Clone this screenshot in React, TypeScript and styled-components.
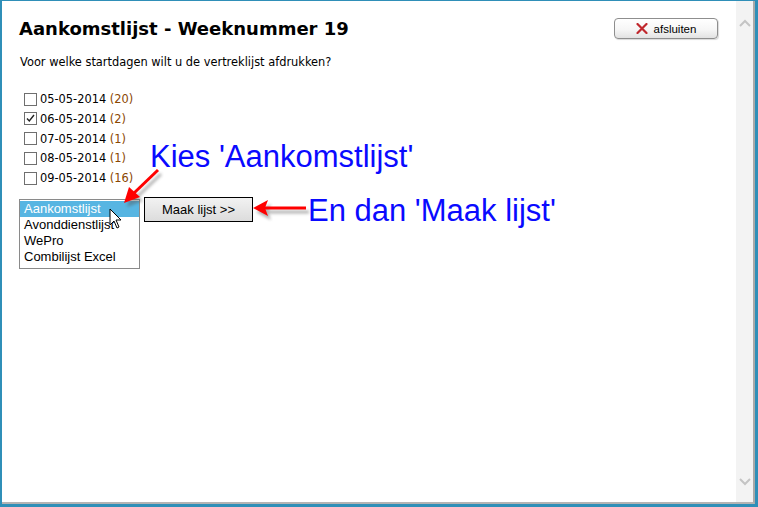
import React from "react";
import styled, { createGlobalStyle } from "styled-components";

const Global = createGlobalStyle`
  html, body { margin: 0; padding: 0; background: #ffffff; }
  * { box-sizing: border-box; }
`;

const Window = styled.div`
  position: relative;
  width: 758px;
  height: 507px;
  background: #2f8fb8;
  padding: 1px 3px 3px 2px;
  display: flex;
`;

const Frame = styled.div`
  flex: 1;
  display: flex;
  background: #ffffff;
  border-right: 2px solid #a9a9a9;
  border-bottom: 2px solid #b4b4b4;
`;

const Content = styled.div`
  flex: 1;
  padding: 16px 0 0 17px;
  display: flex;
  flex-direction: column;
  font-family: "DejaVu Sans", Verdana, sans-serif;
  color: #000;
`;

const Header = styled.div`
  display: flex;
  align-items: flex-start;
  justify-content: space-between;
  padding-right: 18px;
`;

const Title = styled.h1`
  margin: 0;
  font-size: 18px;
  font-weight: bold;
  line-height: 24px;
`;

const CloseButton = styled.button`
  margin-top: 1px;
  width: 104px;
  height: 21px;
  border: 1px solid #8e8e8e;
  border-radius: 4px;
  background: linear-gradient(#ffffff 0%, #f6f6f6 55%, #e2e2e2 100%);
  box-shadow: 1px 1px 1px rgba(0, 0, 0, 0.15);
  display: flex;
  align-items: center;
  justify-content: center;
  gap: 6px;
  font-family: "Liberation Sans", Arial, sans-serif;
  font-size: 11.5px;
  color: #000;
  padding: 0;
`;

const Subtitle = styled.p`
  margin: 14px 0 0 1px;
  font-size: 11.4px;
  line-height: 14px;
`;

const DayList = styled.div`
  margin-top: 23px;
  display: flex;
  flex-direction: column;
  gap: 5.8px;
  padding-left: 5px;
`;

const DayRow = styled.label`
  display: flex;
  align-items: center;
  gap: 3px;
  font-size: 11.4px;
  line-height: 14px;
  height: 14px;
`;

const Box = styled.span`
  width: 13px;
  height: 13px;
  border: 1px solid #6f6f6f;
  background: #fff;
  display: flex;
  align-items: center;
  justify-content: center;
`;

const Count = styled.span`
  color: #8a4600;
`;

const Controls = styled.div`
  margin-top: 12px;
  display: flex;
  align-items: flex-start;
  gap: 4px;
`;

const ListBox = styled.div`
  margin-top: 2px;
  width: 121px;
  height: 70px;
  border: 1px solid #8a8a8a;
  padding: 1px 0;
  display: flex;
  flex-direction: column;
  font-family: "Liberation Sans", Arial, sans-serif;
  font-size: 13px;
`;

const Option = styled.div<{ $selected?: boolean }>`
  height: 16px;
  line-height: 16px;
  padding-left: 4px;
  background: ${(p) => (p.$selected ? "#57b5e2" : "transparent")};
  color: ${(p) => (p.$selected ? "#ffffff" : "#000000")};
`;

const MakeButton = styled.button`
  width: 109px;
  height: 25px;
  border: 1px solid #000;
  background: linear-gradient(#f2f2f2, #dcdcdc);
  font-family: "Liberation Sans", Arial, sans-serif;
  font-size: 13px;
  color: #000;
  padding: 0;
`;

const Scrollbar = styled.div`
  width: 17px;
  background: #f3f3f3;
  display: flex;
  flex-direction: column;
  justify-content: space-between;
  align-items: center;
  padding: 18px 0 16px;
`;

const Note = styled.div<{ $x: number; $y: number }>`
  position: absolute;
  left: ${(p) => p.$x}px;
  top: ${(p) => p.$y}px;
  font-family: "Liberation Sans", Arial, sans-serif;
  font-size: 31px;
  line-height: 36px;
  color: #0a0aff;
  white-space: nowrap;
`;

const Overlay = styled.svg`
  position: absolute;
  left: 0;
  top: 0;
  pointer-events: none;
`;

const days = [
  { d: "05-05-2014", n: 20, c: false },
  { d: "06-05-2014", n: 2, c: true },
  { d: "07-05-2014", n: 1, c: false },
  { d: "08-05-2014", n: 1, c: false },
  { d: "09-05-2014", n: 16, c: false },
];

export default function App() {
  return (
    <>
      <Global />
      <Window>
        <Frame>
          <Content>
            <Header>
              <Title>Aankomstlijst - Weeknummer 19</Title>
              <CloseButton>
                <svg width="12" height="11" viewBox="0 0 12 11">
                  <path d="M1.5 1 L10.5 10 M10.5 1 L1.5 10" stroke="#c0282d" strokeWidth="2.2" strokeLinecap="round" />
                </svg>
                afsluiten
              </CloseButton>
            </Header>
            <Subtitle>Voor welke startdagen wilt u de vertreklijst afdrukken?</Subtitle>
            <DayList>
              {days.map((x) => (
                <DayRow key={x.d}>
                  <Box>
                    {x.c && (
                      <svg width="9" height="9" viewBox="0 0 9 9">
                        <path d="M1 4.5 L3.3 7 L8 1" stroke="#222" strokeWidth="1.4" fill="none" />
                      </svg>
                    )}
                  </Box>
                  <span>
                    {x.d} <Count>({x.n})</Count>
                  </span>
                </DayRow>
              ))}
            </DayList>
            <Controls>
              <ListBox>
                <Option $selected>Aankomstlijst</Option>
                <Option>Avonddienstlijst</Option>
                <Option>WePro</Option>
                <Option>Combilijst Excel</Option>
              </ListBox>
              <MakeButton>Maak lijst &gt;&gt;</MakeButton>
            </Controls>
          </Content>
          <Scrollbar>
            <svg width="12" height="8" viewBox="0 0 12 8">
              <path d="M1 7 L6 2 L11 7" stroke="#c4c4c4" strokeWidth="2" fill="none" />
            </svg>
            <svg width="12" height="8" viewBox="0 0 12 8">
              <path d="M1 1 L6 6 L11 1" stroke="#c4c4c4" strokeWidth="2" fill="none" />
            </svg>
          </Scrollbar>
        </Frame>
        <Note $x={150} $y={139}>Kies 'Aankomstlijst'</Note>
        <Note $x={308} $y={193}>En dan 'Maak lijst'</Note>
        <Overlay width="758" height="507" viewBox="0 0 758 507">
          <defs>
            <filter id="sh" x="-20%" y="-20%" width="140%" height="140%">
              <feGaussianBlur stdDeviation="1.5" />
            </filter>
          </defs>
          <g transform="translate(3,4)" filter="url(#sh)" opacity="0.45">
            <path d="M158 170 L133 194" stroke="#555" strokeWidth="3" fill="none" />
            <path d="M124 203 L129 187 L140 197 Z" fill="#555" />
            <path d="M306 208 L262 208" stroke="#555" strokeWidth="3" fill="none" />
            <path d="M253 208 L268 200 L265 208 L268 216 Z" fill="#555" />
          </g>
          <path d="M158 170 L133 194" stroke="#f00" strokeWidth="3" fill="none" />
          <path d="M124 203 L129 187 L140 197 Z" fill="#f00" />
          <path d="M306 208 L262 208" stroke="#f00" strokeWidth="3" fill="none" />
          <path d="M253 208 L268 200 L265 208 L268 216 Z" fill="#f00" />
          <path
            d="M110 209 L110 225 L114 221 L117 228 L119 227 L116 220 L121 220 Z"
            fill="#fff"
            stroke="#000"
            strokeWidth="1"
            strokeLinejoin="round"
          />
        </Overlay>
      </Window>
    </>
  );
}
